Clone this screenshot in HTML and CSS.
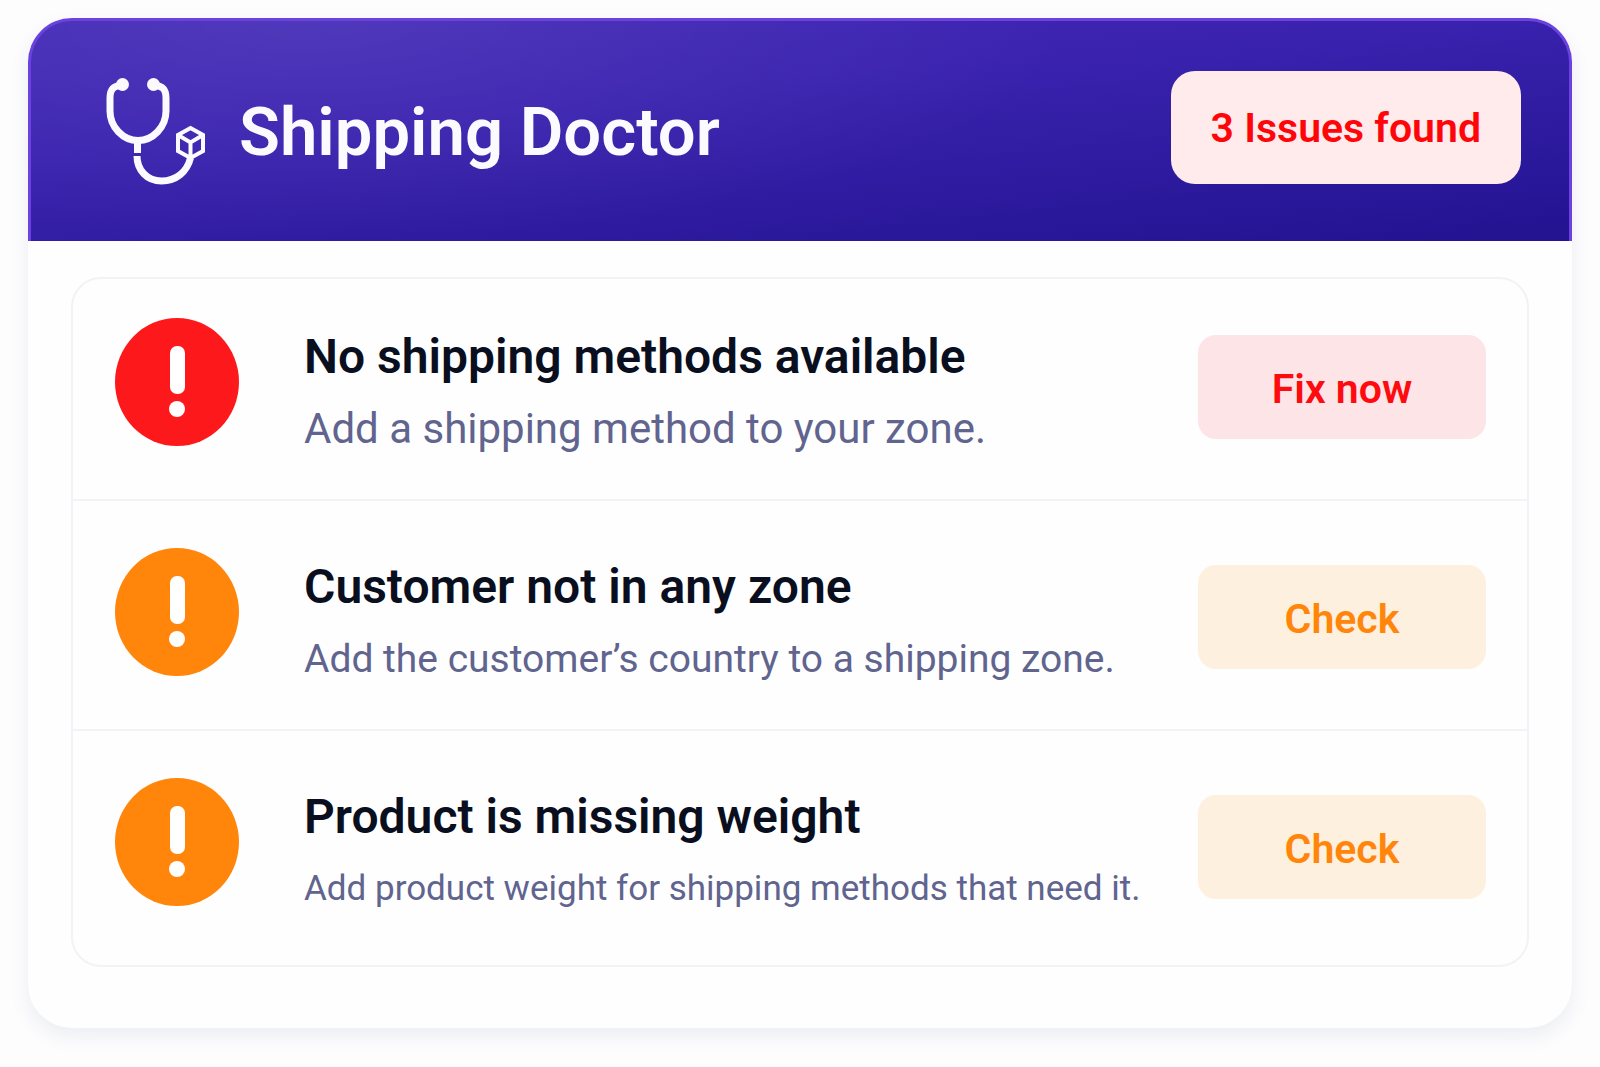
FILE: index.html
```html
<!DOCTYPE html>
<html lang="en">
<head>
  <meta charset="UTF-8">
  <meta name="viewport" content="width=device-width, initial-scale=1">
  <title>Shipping Doctor</title>
  <link rel="stylesheet" href="styles.css">
</head>
<body>
  <main class="card">
    <header class="card-header">
      <svg class="logo" viewBox="0 0 100 108" fill="none" stroke="#fafaff" aria-hidden="true">
        <path d="M17 6.500C9 6.500 5 10 5 19V32C5 48 18 61.500 33 61.500S61 48 61 32V19C61 10 57 6.500 49 6.500" stroke-width="7"/>
        <path d="M32.500 61V74" stroke-width="7"/>
        <path d="M32 77C32 91 42 102 56.500 102C71 102 82 93 85.500 79" stroke-width="7"/>
        <circle cx="17.500" cy="5.500" r="6.500" fill="#fafaff" stroke="none"/>
        <circle cx="48.500" cy="5.500" r="6.500" fill="#fafaff" stroke="none"/>
        <path d="M85.500 49L98 56V72L85.500 79L73 72V56ZM73 56L85.500 63.500L98 56M85.500 63.500V79" stroke-width="4"/>
      </svg>
      <h1>Shipping Doctor</h1>
      <span class="badge">3 Issues found</span>
    </header>

    <ul class="issues">
      <li class="issue critical">
        <svg class="issue-icon" viewBox="0 0 124 128" aria-hidden="true">
          <ellipse cx="62" cy="64" rx="62" ry="64"/>
          <rect x="55" y="28" width="15" height="48" rx="7"/>
          <circle cx="62" cy="91" r="8"/>
        </svg>
        <div class="issue-text">
          <h2>No shipping methods available</h2>
          <p>Add a shipping method to your zone.</p>
        </div>
        <button type="button">Fix now</button>
      </li>
      <li class="issue warning">
        <svg class="issue-icon" viewBox="0 0 124 128" aria-hidden="true">
          <ellipse cx="62" cy="64" rx="62" ry="64"/>
          <rect x="55" y="28" width="15" height="48" rx="7"/>
          <circle cx="62" cy="91" r="8"/>
        </svg>
        <div class="issue-text">
          <h2>Customer not in any zone</h2>
          <p class="medium">Add the customer’s country to a shipping zone.</p>
        </div>
        <button type="button">Check</button>
      </li>
      <li class="issue warning">
        <svg class="issue-icon" viewBox="0 0 124 128" aria-hidden="true">
          <ellipse cx="62" cy="64" rx="62" ry="64"/>
          <rect x="55" y="28" width="15" height="48" rx="7"/>
          <circle cx="62" cy="91" r="8"/>
        </svg>
        <div class="issue-text">
          <h2>Product is missing weight</h2>
          <p class="small">Add product weight for shipping methods that need it.</p>
        </div>
        <button type="button">Check</button>
      </li>
    </ul>
  </main>
</body>
</html>
```
FILE: styles.css
```css
* {
  box-sizing: border-box;
}

body {
  margin: 0;
  padding: 18px 28px 38px;
  background: #fdfdfe;
  font-family: Roboto, Inter, sans-serif;
}

h1, h2, p {
  margin: 0;
}

.card {
  padding-bottom: 61px;
  background: #fefefe;
  border-radius: 44px;
  box-shadow: 0 8px 20px rgba(40, 50, 100, 0.08);
}

.card-header {
  display: flex;
  align-items: flex-start;
  padding: 50px 48px 54px 74px;
  background:
    radial-gradient(ellipse 50% 100% at 18% 0, rgba(255, 255, 255, 0.08), transparent),
    linear-gradient(174deg, #4229b6, #3b23b0 35%, #221390);
  border: 3px solid #6b42e0;
  border-bottom: none;
  border-radius: 44px 44px 0 0;
  color: #fafaff;
}

.logo {
  width: 100px;
  height: 108px;
  margin-top: 8px;
  overflow: visible;
}

h1 {
  flex: 1;
  margin: 20px 0 0 34px;
  font-size: 67px;
  line-height: 82px;
  font-weight: 600;
}

.badge {
  padding: 30px 40px 28px;
  background: #ffebeb;
  border-radius: 24px;
  color: #ff0509;
  font-size: 41px;
  line-height: 55px;
  font-weight: 600;
}

.issues {
  margin: 36px 43px 0;
  padding: 0;
  border: 2px solid #f2f2f7;
  border-radius: 30px;
  list-style: none;
}

.issue {
  display: flex;
  align-items: flex-start;
  padding: 47px 41px 34px 42px;
}

.issue:first-child {
  padding-top: 39px;
}

.issue:last-child {
  padding-bottom: 40px;
}

.issue + .issue {
  border-top: 2px solid #f2f2f7;
}

.issue-icon {
  width: 124px;
  height: 128px;
  fill: #fff;
}

.critical ellipse {
  fill: #fd191b;
}

.warning ellipse {
  fill: #ff860a;
}

.issue-text {
  flex: 1;
  margin: 6px 0 0 65px;
}

h2 {
  margin-bottom: 3px;
  color: #0a0f20;
  font-size: 48px;
  line-height: 66px;
  font-weight: 600;
}

p {
  color: #60648e;
  font-size: 42px;
  line-height: 72px;
}

.medium {
  font-size: 39px;
}

.small {
  font-size: 35px;
}

button {
  width: 288px;
  height: 104px;
  margin-top: 17px;
  padding: 4px 0 0;
  border: none;
  border-radius: 18px;
  font-family: inherit;
  font-size: 41px;
  font-weight: 600;
  cursor: pointer;
}

.critical button {
  background: #fde5e7;
  color: #fe0b10;
}

.warning button {
  background: #fef0df;
  color: #ff860a;
}
```
